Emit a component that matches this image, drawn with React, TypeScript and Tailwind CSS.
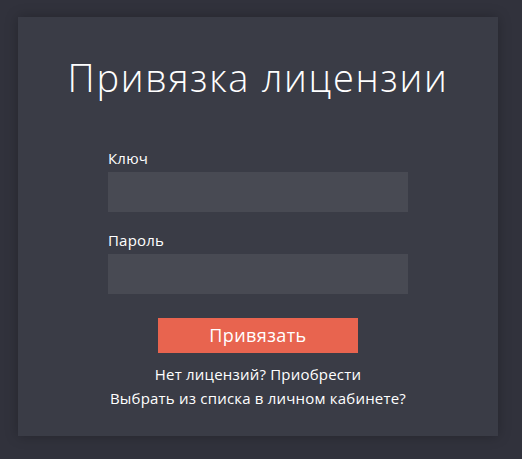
export default function App() {
  return (
    <div className="min-h-[459px] w-full bg-[#31323c] pt-[17px] pl-[18px] pb-[23px] font-['Open_Sans',sans-serif]">
      <div className="flex h-[419px] w-[480px] flex-col items-center bg-[#3a3c46] shadow-[0_0_12px_rgba(0,0,0,0.25)]">
        <h1 className="mt-[38px] text-[38px] font-light leading-[44px] tracking-[1.7px] text-white">
          Привязка лицензии
        </h1>
        <form className="mt-[49px] flex w-[300px] flex-col">
          <label className="text-[15px] leading-[20px] tracking-[0.2px] text-white">Ключ</label>
          <input className="mt-[4px] h-[40px] w-full bg-[#484a53] px-3 text-white outline-none" />
          <label className="mt-[18px] text-[15px] leading-[20px] tracking-[0.2px] text-white">Пароль</label>
          <input type="password" className="mt-[4px] h-[40px] w-full bg-[#484a53] px-3 text-white outline-none" />
          <button type="button" className="mx-auto mt-[24px] h-[35px] w-[200px] bg-[#e8644f] text-[18px] tracking-[0.4px] text-white">
            Привязать
          </button>
        </form>
        <div className="mt-[9px] flex flex-col items-center text-[15px] leading-[24px] tracking-[0.2px] text-white">
          <span>Нет лицензий? Приобрести</span>
          <span>Выбрать из списка в личном кабинете?</span>
        </div>
      </div>
    </div>
  );
}
